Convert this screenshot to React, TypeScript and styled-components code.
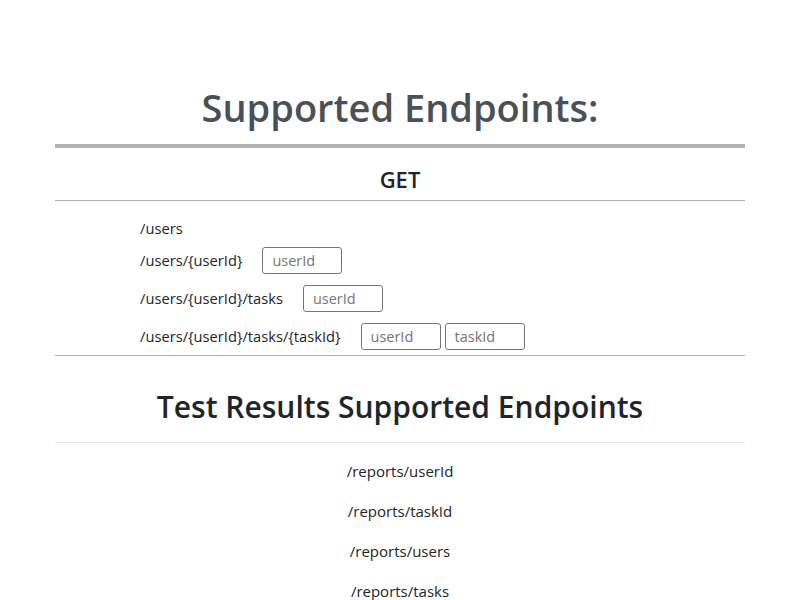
import styled, { createGlobalStyle } from "styled-components";

const GlobalStyle = createGlobalStyle`
  body {
    margin: 0;
    background: #fff;
    font-family: "Open Sans", "Noto Sans", sans-serif;
    color: #212529;
  }
`;

const Container = styled.div`
  width: 690px;
  margin: 0 auto;
  padding-top: 80px;
`;

const Title = styled.h1`
  margin: 0 0 10px;
  text-align: center;
  font-size: 38px;
  font-weight: 600;
  line-height: 54px;
  color: #495057;
`;

const Rule = styled.hr<{ $size?: number; $color?: string }>`
  margin: 0;
  border: none;
  height: ${({ $size }) => $size ?? 1}px;
  background: ${({ $color }) => $color ?? "#b3b3b3"};
`;

const MethodTitle = styled.h4`
  margin: 0;
  padding: 21px 0 11px;
  text-align: center;
  font-size: 22px;
  font-weight: 600;
  line-height: 20px;
`;

const EndpointList = styled.ul`
  list-style: none;
  margin: 0;
  padding: 14px 0 0 85px;
`;

const EndpointRow = styled.li<{ $compact?: boolean }>`
  display: flex;
  align-items: center;
  min-height: ${({ $compact }) => ($compact ? 26 : 38)}px;
  font-size: 14.7px;
  line-height: 24px;
`;

const Path = styled.span`
  margin-right: 16px;
`;

const ParamInput = styled.input`
  box-sizing: border-box;
  width: 80px;
  height: 27px;
  margin-left: 4px;
  padding: 1px 9px;
  border: 1px solid #767676;
  border-radius: 3px;
  font-family: inherit;
  font-size: 14.5px;
  color: #212529;
  &::placeholder {
    color: #757575;
  }
`;

const SectionTitle = styled.h2`
  margin: 0;
  padding: 35px 0 19px;
  text-align: center;
  font-size: 30px;
  font-weight: 600;
  line-height: 32px;
`;

const ReportList = styled.ul`
  list-style: none;
  margin: 0;
  padding: 16px 0 0;
`;

const ReportItem = styled.li`
  text-align: center;
  font-size: 15px;
  line-height: 24px;
  margin-bottom: 16px;
`;

const endpoints: { path: string; params: string[] }[] = [
  { path: "/users", params: [] },
  { path: "/users/{userId}", params: ["userId"] },
  { path: "/users/{userId}/tasks", params: ["userId"] },
  { path: "/users/{userId}/tasks/{taskId}", params: ["userId", "taskId"] },
];

const reports = ["/reports/userId", "/reports/taskId", "/reports/users", "/reports/tasks"];

const App = () => {
  return (
    <>
      <GlobalStyle />
      <Container>
        <Title>Supported Endpoints:</Title>
        <Rule $size={4} />
        <MethodTitle>GET</MethodTitle>
        <Rule />
        <EndpointList>
          {endpoints.map((e) => (
            <EndpointRow key={e.path} $compact={e.params.length === 0}>
              <Path>{e.path}</Path>
              {e.params.map((p) => (
                <ParamInput key={p} placeholder={p} />
              ))}
            </EndpointRow>
          ))}
        </EndpointList>
        <Rule />
        <SectionTitle>Test Results Supported Endpoints</SectionTitle>
        <Rule $color="#e6e6e6" />
        <ReportList>
          {reports.map((r) => (
            <ReportItem key={r}>{r}</ReportItem>
          ))}
        </ReportList>
      </Container>
    </>
  );
};

export default App;
